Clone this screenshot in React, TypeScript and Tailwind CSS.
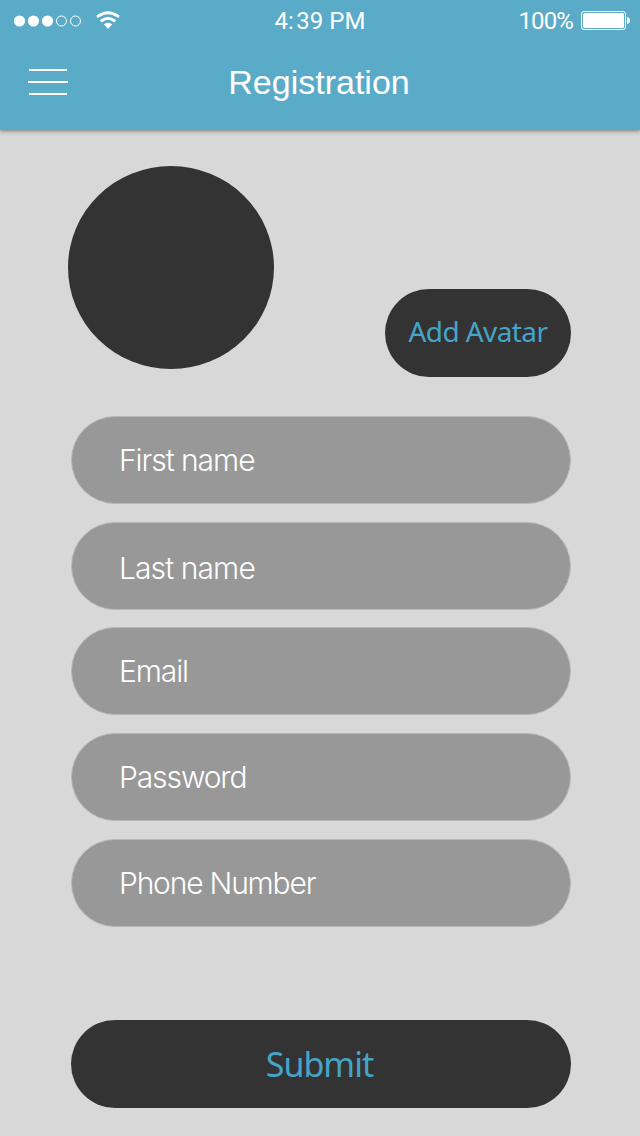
const fields = [
  { label: "First name", box: "h-[88px] mb-[18px] pb-px", text: "tracking-[-1.05px]" },
  { label: "Last name", box: "h-[88px] mb-[17px] pt-[3px]", text: "tracking-[-0.9px]" },
  { label: "Email", box: "h-[88px] mb-[18px] pb-px", text: "tracking-[-1.1px]" },
  { label: "Password", box: "h-[88px] mb-[18px] pb-px", text: "tracking-[-1.1px]" },
  { label: "Phone Number", box: "h-[88px] pb-px", text: "tracking-[-1.2px]" },
];

function Signal() {
  return (
    <svg className="block" width="68" height="12" viewBox="0 0 68 12" fill="none">
      <circle cx="5.5" cy="6" r="5.6" fill="#fff" />
      <circle cx="19.5" cy="6" r="5.6" fill="#fff" />
      <circle cx="33.5" cy="6" r="5.6" fill="#fff" />
      <circle cx="47.5" cy="6" r="5" stroke="#fff" />
      <circle cx="61.5" cy="6" r="5" stroke="#fff" />
    </svg>
  );
}

function Wifi() {
  return (
    <svg className="mb-px block" width="24" height="18" viewBox="0 0 24 18" fill="none" stroke="#fff" strokeWidth="2.8">
      <path d="M1 6Q12 -2.600 23 6" />
      <path d="M4.800 10.300Q12 4.500 19.200 10.300" />
      <path d="M12 18L7.700 13.300Q12 10.300 16.300 13.300Z" fill="#fff" stroke="none" />
    </svg>
  );
}

function Battery() {
  return (
    <svg className="block" width="49" height="19" viewBox="0 0 49 19" fill="none">
      <rect x=".5" y=".5" width="44" height="18" rx="2.5" stroke="#fff" />
      <rect x="2" y="2" width="41" height="15" rx="1.5" fill="#fff" />
      <path d="M46 6Q49 6.500 49 9.500T46 13Z" fill="#fff" />
    </svg>
  );
}

export default function App() {
  return (
    <div className="flex h-[1136px] w-[640px] flex-col overflow-hidden bg-[#d8d8d8]">
      <header className="h-[130px] shrink-0 bg-[#5aabc7] text-white shadow-[0_1px_4px_rgba(0,0,0,0.45)]">
        <div className="grid h-[41px] grid-cols-3 items-center font-['Roboto',sans-serif] text-[24px] leading-none">
          <div className="flex items-center gap-[14px] pl-[14px]">
            <Signal />
            <Wifi />
          </div>
          <span className="pt-px text-center whitespace-nowrap">4:&#8202;39 PM</span>
          <div className="flex items-center justify-end gap-[8px] pr-[10px]">
            <span className="pt-px tracking-[-0.9px]">100%</span>
            <Battery />
          </div>
        </div>
        <div className="grid h-[82px] grid-cols-[100px_1fr_100px] items-center">
          <button type="button" aria-label="Menu" className="ml-[28px] flex w-[40px] flex-col items-center gap-[10px]">
            <span className="h-[2px] w-[38px] bg-white" />
            <span className="h-[2px] w-[40px] bg-white" />
            <span className="h-[2px] w-[38px] bg-white" />
          </button>
          <h1 className="pr-[2px] text-center font-['Liberation_Sans',sans-serif] text-[34px] leading-[40px]">
            Registration
          </h1>
        </div>
      </header>

      <main className="flex flex-col pr-[69px] pl-[71px]">
        <section className="-ml-[3px] mt-[36px] flex h-[211px] items-start justify-between">
          <div className="h-[203px] w-[206px] rounded-[50%] bg-[#333333]" />
          <button
            type="button"
            className="mt-[123px] flex h-[88px] w-[186px] items-center justify-center rounded-full bg-[#333333] pb-[4px] font-['Noto_Sans',sans-serif] text-[28px] leading-none tracking-[-0.6px] whitespace-nowrap text-[#45a5c9]"
          >
            Add Avatar
          </button>
        </section>

        <form className="mt-[39px] flex flex-col">
          {fields.map((field) => (
            <div
              key={field.label}
              className={`${field.box} flex items-center rounded-full border border-[#b8b8b8] bg-[#989898] pl-[47px] font-['Inter',sans-serif] text-[30px] leading-none font-light text-white`}
            >
              <span className={field.text}>{field.label}</span>
            </div>
          ))}
          <button
            type="button"
            className="mt-[93px] flex h-[88px] items-center justify-center rounded-full bg-[#333333] pr-[3px] font-['Noto_Sans',sans-serif] text-[34px] leading-none tracking-[-1px] text-[#45a5c9]"
          >
            Submit
          </button>
        </form>
      </main>
    </div>
  );
}
